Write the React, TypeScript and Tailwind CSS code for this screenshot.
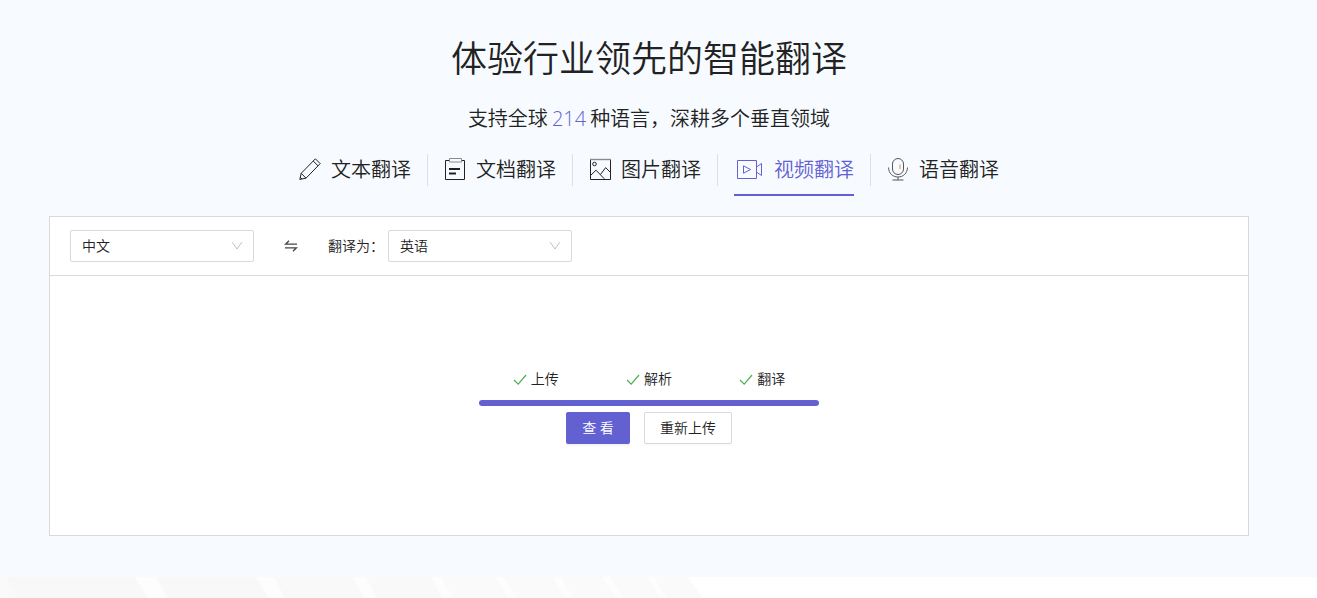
import React, { useState } from "react";
import { clsx } from "clsx";

const languages = ["中文", "英语", "日语", "韩语", "法语"];

const steps = ["上传", "解析", "翻译"];

function TextIcon() {
  return (
    <svg className="h-6 w-[22px]" viewBox="0 0 22 24" fill="none" stroke="currentColor">
      <path d="M.8 21.4 2.2 15.3 16.4.8 21.2 5.6 7 20.2ZM2.2 15.3 7 20.2M14.2 3 19 7.8M1.2 19.2 3 21" />
    </svg>
  );
}

function DocIcon() {
  return (
    <svg className="h-6 w-[22px]" viewBox="0 0 22 24" fill="none" stroke="currentColor">
      <path d="M5.5 2.5H1.5V21.5H20.5V2.5H17.5" />
      <path d="M5.5.5H17.5V4H5.5Z" stroke="#8a8a8a" />
      <path d="M5 11H16M5 15.5H12" strokeWidth="1.8" />
    </svg>
  );
}

function ImageIcon() {
  return (
    <svg className="h-6 w-[22px]" viewBox="0 0 22 24" fill="none" stroke="currentColor">
      <path d="M1.5 1.5V21.5H21.5V1.5" />
      <path d="M1 1.5H22" stroke="#8a8a8a" strokeWidth="1.4" />
      <circle cx="5.5" cy="6" r="1.8" />
      <path d="M1.5 17.5 7 12.2 15.3 20.8M11.5 16.5 16.6 9.6 21.5 14.5" />
    </svg>
  );
}

function VideoIcon() {
  return (
    <svg className="h-6 w-[30px]" viewBox="0 0 30 24" fill="none" stroke="currentColor">
      <path d="M3.5 2.5H22.5V20.5H3.5Z" />
      <path d="M9.5 7.8V15.2L16.5 11.5ZM22.5 9 27.5 5.5V17.5L22.5 14" />
    </svg>
  );
}

function VoiceIcon() {
  return (
    <svg className="h-6 w-[22px]" viewBox="0 0 22 24" fill="none" stroke="currentColor">
      <g className="opacity-75">
        <rect x="5.5" y=".5" width="11" height="16" rx="5.5" />
        <path d="M1.5 9.5C1.8 15.5 5.8 19 11 19S20.2 15.5 20.5 9.5M11 19V22M5.5 22H16.5" />
      </g>
      <path d="M13 6.5V11" stroke="#c9974f" />
    </svg>
  );
}

const tabs = [
  { label: "文本翻译", icon: TextIcon },
  { label: "文档翻译", icon: DocIcon },
  { label: "图片翻译", icon: ImageIcon },
  { label: "视频翻译", icon: VideoIcon },
  { label: "语音翻译", icon: VoiceIcon },
];

interface LanguageSelectProps {
  id: string;
  label?: string;
  value: string;
  onChange: (value: string) => void;
}

function LanguageSelect({ id, label, value, onChange }: LanguageSelectProps) {
  return (
    <div className="relative">
      <select
        id={id}
        aria-label={label}
        value={value}
        onChange={(e) => onChange(e.target.value)}
        className="block h-8 w-[184px] appearance-none rounded-xs border border-[#d9d9d9] bg-white pr-8 pl-[11px] text-sm outline-none focus:border-[#6360d2]"
      >
        {languages.map((lang) => (
          <option key={lang}>{lang}</option>
        ))}
      </select>
      <svg
        className="pointer-events-none absolute top-[10px] right-[11px] h-3 w-3"
        viewBox="0 0 12 12"
        fill="none"
        stroke="#bfbfbf"
      >
        <path d="M1.2 2.2 6 9 10.8 2.2" />
      </svg>
    </div>
  );
}

export default function App() {
  const [active, setActive] = useState(3);
  const [source, setSource] = useState("中文");
  const [target, setTarget] = useState("英语");

  const swap = () => {
    setSource(target);
    setTarget(source);
  };

  return (
    <div className="font-['Open_Sans','Noto_Sans_CJK_SC',sans-serif] text-sm font-[350] text-[#222]">
      <section className="bg-[#f7fbff] pt-[33px] pr-[19px] pb-[41px]">
        <h1 className="text-center text-4xl leading-[52px] font-[350]">体验行业领先的智能翻译</h1>
        <p className="mt-5 text-center text-xl leading-7">
          支持全球<span className="px-1 text-[#6360d2]">214</span>种语言，深耕多个垂直领域
        </p>

        {/* Tabs */}
        <nav className="mt-[21px] flex justify-center">
          {tabs.map((tab, index) => (
            <React.Fragment key={tab.label}>
              {index > 0 && <span className="mx-4 h-8 w-px bg-[#dcdfe6]" />}
              <button
                type="button"
                onClick={() => setActive(index)}
                className={clsx(
                  "flex h-[42px] items-start gap-[10px] border-b-2 text-xl leading-8 whitespace-nowrap",
                  active === index ? "border-[#6360d2] text-[#6360d2]" : "border-transparent"
                )}
              >
                <span className="flex h-8 items-center">
                  <tab.icon />
                </span>
                {tab.label}
              </button>
            </React.Fragment>
          ))}
        </nav>

        {/* Translation panel */}
        <div className="mx-auto mt-5 max-w-[1200px] border border-[#d9d9d9] bg-white">
          <div className="flex items-center border-b border-[#d9d9d9] px-5 py-[13px]">
            <LanguageSelect id="source" label="源语言" value={source} onChange={setSource} />
            <button
              type="button"
              aria-label="交换语言"
              onClick={swap}
              className="flex h-8 w-[74px] items-center justify-center"
            >
              <svg className="h-[14px] w-[14px]" viewBox="0 0 14 14" fill="none" stroke="#444" strokeWidth="1.3">
                <path d="M13 5.2H1.6L5 1.8M1 8.8H12.4L9 12.2" />
              </svg>
            </button>
            <label htmlFor="target" className="mr-1 w-14 whitespace-nowrap">
              翻译为：
            </label>
            <LanguageSelect id="target" value={target} onChange={setTarget} />
          </div>

          <div className="flex flex-col items-center pt-[92px] pb-[91px]">
            <ol className="grid w-[340px] grid-cols-3 leading-[22px]">
              {steps.map((step) => (
                <li key={step} className="flex items-center justify-center gap-1">
                  <svg className="h-[14px] w-[14px]" viewBox="0 0 14 14" fill="none" stroke="#4caf50" strokeWidth="1.2">
                    <path d="M1 8 5.2 12.2 13 3" />
                  </svg>
                  {step}
                </li>
              ))}
            </ol>
            <div className="mt-[10px] h-[6px] w-[340px] rounded-full bg-[#6360d2]" />
            <div className="mt-[6px] flex gap-[14px]">
              <button
                type="button"
                className="h-8 w-16 rounded-xs bg-[#6360d2] text-white shadow-[0_2px_0_rgba(0,0,0,0.045)]"
              >
                查 看
              </button>
              <button
                type="button"
                className="h-8 w-[88px] rounded-xs border border-[#d9d9d9] bg-white shadow-[0_2px_0_rgba(0,0,0,0.016)]"
              >
                重新上传
              </button>
            </div>
          </div>
        </div>
      </section>

      {/* Slanted stripes at the top of the next section */}
      <div className="overflow-hidden bg-white">
        <svg className="block h-[21px] w-[720px]" viewBox="0 0 720 21">
          <path d="M0 0H687L703 21H0Z" fill="#fdfdfd" />
          <path d="M0 0H5L17 21H0Z" fill="#fafafa" />
          <path d="M5 0H135L148 21H17ZM156 0H256L269 21H168Z" fill="#f8f8f8" />
          <path d="M274 0H352L365 21H285ZM366 0H431L442 21H377Z" fill="#f9f9f9" />
          <path
            d="M441 0H495L508 21H453ZM504 0H553L565 21H517ZM561 0H602L615 21H573ZM610 0H647L660 21H623ZM654 0H687L703 21H667Z"
            fill="#fafafa"
          />
        </svg>
      </div>
    </div>
  );
}
